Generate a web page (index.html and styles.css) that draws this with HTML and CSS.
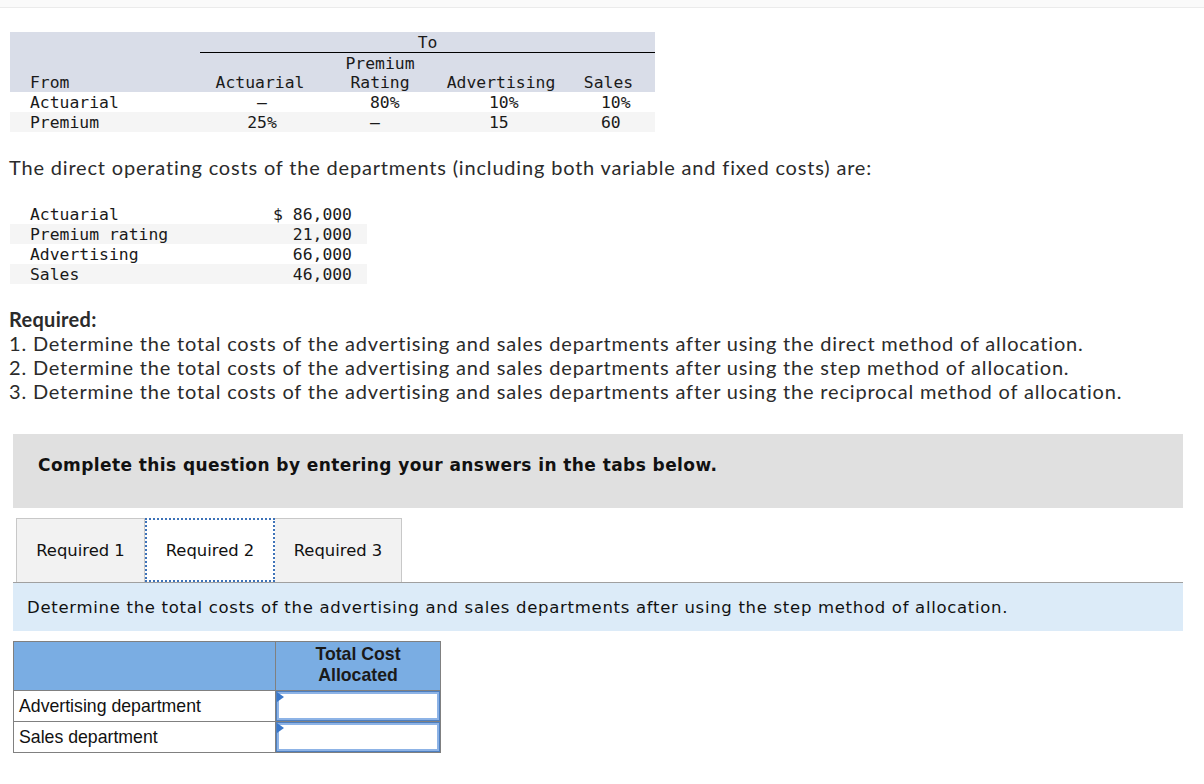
FILE: index.html
```html
<!DOCTYPE html>
<html>
<head>
<meta charset="utf-8">
<link rel="stylesheet" href="styles.css">
</head>
<body>
<div class="topbar"></div>
<div class="page">
  <table class="alloc">
    <colgroup><col class="c1"><col class="c2"><col class="c3"><col class="c4"><col class="c5"></colgroup>
    <tr class="hd"><th></th><th colspan="4" class="to">To</th></tr>
    <tr class="hd hd2"><th class="lbl">From</th><th>Actuarial</th><th>Premium<br>Rating</th><th>Advertising</th><th>Sales</th></tr>
    <tr><td class="lbl">Actuarial</td><td class="ctr">—</td><td class="p3">80%</td><td class="p4">10%</td><td class="p5">10%</td></tr>
    <tr class="alt"><td class="lbl">Premium</td><td class="ctr">25%</td><td class="p3">—</td><td class="p4">15</td><td class="p5">60</td></tr>
  </table>

  <p class="para">The direct operating costs of the departments (including both variable and fixed costs) are:</p>

  <table class="costs">
    <tr><td class="lbl">Actuarial</td><td class="num">$ 86,000</td></tr>
    <tr class="alt"><td class="lbl">Premium rating</td><td class="num">21,000</td></tr>
    <tr><td class="lbl">Advertising</td><td class="num">66,000</td></tr>
    <tr class="alt"><td class="lbl">Sales</td><td class="num">46,000</td></tr>
  </table>

  <div class="required">
    <div class="req-title">Required:</div>
    <div>1. Determine the total costs of the advertising and sales departments after using the direct method of allocation.</div>
    <div>2. Determine the total costs of the advertising and sales departments after using the step method of allocation.</div>
    <div>3. Determine the total costs of the advertising and sales departments after using the reciprocal method of allocation.</div>
  </div>

  <div class="instr">Complete this question by entering your answers in the tabs below.</div>

  <div class="tabs">
    <div class="tab t1">Required 1</div>
    <div class="tab t2 active">Required 2</div>
    <div class="tab t3">Required 3</div>
  </div>
  <div class="banner">Determine the total costs of the advertising and sales departments after using the step method of allocation.</div>

  <table class="answer">
    <colgroup><col class="ac1"><col class="ac2"></colgroup>
    <tr class="ahd"><th></th><th>Total Cost<br>Allocated</th></tr>
    <tr><td class="a1">Advertising department</td><td class="inp"><div class="box"><span class="tri"></span></div></td></tr>
    <tr><td class="a1">Sales department</td><td class="inp"><div class="box"><span class="tri"></span></div></td></tr>
  </table>
</div>
</body>
</html>
```

FILE: styles.css
```css
html, body { margin: 0; padding: 0; background: #fff; }
body { color: #222; font-family: "Lato", "Liberation Sans", sans-serif; }

.topbar { height: 7px; background: #fafafa; border-bottom: 1px solid #ebebeb; }

.page { padding: 0 9px; }

/* monospace tables */
.alloc, .costs {
  font-family: "DejaVu Sans Mono", "Liberation Mono", monospace;
  font-size: 16.4px;
  line-height: 20px;
  color: #1a1a1a;
  border-collapse: separate;
  border-spacing: 0;
  margin-left: 1px;
}
.alloc { table-layout: fixed; width: 645px; margin-top: 24px; }
.alloc .c1 { width: 190px; }
.alloc .c2 { width: 120px; }
.alloc .c3 { width: 120px; }
.alloc .c4 { width: 122px; }
.alloc .c5 { width: 93px; }
.alloc th, .alloc td { padding: 1px 0 0; line-height: 19px; font-weight: normal; white-space: nowrap; }
.alloc .hd th { background: #d9dde8; text-align: center; vertical-align: bottom; }
.alloc .hd th.lbl { text-align: left; }
.alloc th.to { border-bottom: 1px solid #000; }
.alloc .lbl { padding-left: 20px; text-align: left; }
.alloc .ctr { text-align: center; padding-left: 4px; }
.alloc .p3 { padding-left: 50px; }
.alloc .p4 { padding-left: 49px; }
.alloc .p5 { padding-left: 39px; }
.alt td { background: #f5f5f5; }

.para { margin: 23px 0 0; font-size: 20px; line-height: 24px; letter-spacing: 0.82px; color: #2b2b2b; }

.costs { width: 357px; margin-top: 25px; }
.costs td { padding: 1px 0 0; line-height: 19px; }
.costs .lbl { padding-left: 20px; }
.costs .num { text-align: right; padding-right: 15px; }

.required { margin-top: 23px; font-size: 20px; line-height: 24px; letter-spacing: 0.82px; color: #2b2b2b; }
.req-title { font-weight: bold; letter-spacing: 0.3px; }

.instr {
  margin: 31px 0 0 4px;
  width: 1170px;
  height: 74px;
  box-sizing: border-box;
  background: #e0e0e0;
  padding: 21px 0 0 25px;
  line-height: 20px;
  font-family: "DejaVu Sans", Verdana, sans-serif;
  font-weight: bold;
  font-size: 17px;
  letter-spacing: 0.42px;
  color: #111;
}

.tabs {
  margin: 10px 0 0 4px;
  width: 1170px;
  display: flex;
  padding-left: 3px;
  border-bottom: 1px solid #a0a0a0;
  box-sizing: border-box;
}
.tab {
  height: 64px;
  box-sizing: border-box;
  display: flex;
  align-items: center;
  justify-content: center;
  background: #f2f2f2;
  border: 1px solid #c8c8c8;
  border-bottom: none;
  font-family: "DejaVu Sans", Verdana, sans-serif;
  font-size: 16.4px;
  color: #111;
}
.tab + .tab { border-left: none; }
.t1 { width: 129px; }
.t2 { width: 130px; }
.t3 { width: 127px; }
.tab.active {
  background: #fff;
  border: 2px dotted #3d72b8;
}

.banner {
  margin-left: 4px;
  width: 1170px;
  height: 48px;
  box-sizing: border-box;
  background: #dcebf8;
  display: flex;
  align-items: center;
  padding: 1px 0 0 14px;
  font-family: "DejaVu Sans", Verdana, sans-serif;
  font-size: 16.5px;
  letter-spacing: 0.7px;
  color: #111;
}

.answer {
  margin: 10px 0 0 4px;
  border-collapse: collapse;
  table-layout: fixed;
  width: 427px;
  font-family: "Liberation Sans", Arial, sans-serif;
  font-size: 17.7px;
  color: #111;
}
.answer .ac1 { width: 262px; }
.answer .ac2 { width: 165px; }
.answer th, .answer td { border: 1px solid #808080; padding: 0; }
.answer .ahd th { background: #7aade3; height: 46px; font-weight: bold; text-align: center; line-height: 21px; vertical-align: top; padding-top: 2px; color: #1a1a1a; }
.answer td.a1 { height: 30px; padding-left: 5px; white-space: nowrap; }
.answer td.inp { padding: 1px; }
.box {
  position: relative;
  height: 28px;
  box-sizing: border-box;
  border: 2px solid #8db3e6;
  box-shadow: 0 0 0 1px #4d7fc0;
  background: #fff;
}
.tri {
  position: absolute;
  left: -2px;
  top: -2px;
  width: 0; height: 0;
  border-top: 5px solid transparent;
  border-bottom: 5px solid transparent;
  border-left: 7px solid #3a77c9;
}
```
